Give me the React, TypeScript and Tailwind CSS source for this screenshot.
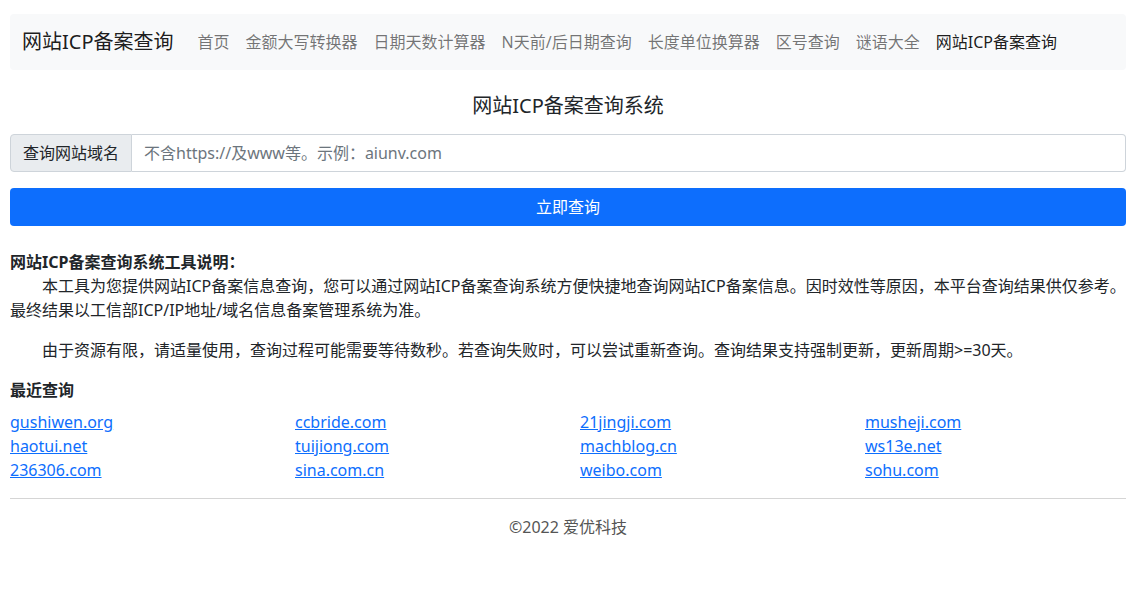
import React from "react";

const NAV_LINKS = [
  { label: "首页" },
  { label: "金额大写转换器" },
  { label: "日期天数计算器" },
  { label: "N天前/后日期查询" },
  { label: "长度单位换算器" },
  { label: "区号查询" },
  { label: "谜语大全" },
  { label: "网站ICP备案查询", active: true },
];

const RECENT = [
  "gushiwen.org", "ccbride.com", "21jingji.com", "musheji.com",
  "haotui.net", "tuijiong.com", "machblog.cn", "ws13e.net",
  "236306.com", "sina.com.cn", "weibo.com", "sohu.com",
];

export default function App() {
  return (
    <div
      className="min-h-[597px] bg-white text-[#212529] text-[16px] leading-[24px]"
      style={{ fontFamily: '"Noto Sans", "Noto Sans CJK SC", sans-serif' }}
    >
      <div className="ml-[10px] w-[1116px] pt-[14px]">
        {/* Navbar */}
        <nav className="h-[56px] bg-[#f8f9fa] rounded-[4px] flex items-center px-[12px]">
          <span className="text-[20px] leading-[30px] text-black/90 mr-[16px]">网站ICP备案查询</span>
          <ul className="flex items-center">
            {NAV_LINKS.map(({ label, active }) => (
              <li key={label}>
                <a
                  href="#"
                  className={`block px-[8px] py-[8px] ${active ? "text-black/90" : "text-black/55"}`}
                >
                  {label}
                </a>
              </li>
            ))}
          </ul>
        </nav>

        {/* Title */}
        <h5 className="text-center text-[20px] leading-[30px] mt-[21px] mb-[13px]">网站ICP备案查询系统</h5>

        {/* Search */}
        <div className="flex h-[38px]">
          <span className="flex items-center px-[12px] bg-[#e9ecef] border border-[#ced4da] rounded-l-[4px]">
            查询网站域名
          </span>
          <input
            className="flex-1 min-w-0 px-[12px] border border-l-0 border-[#ced4da] rounded-r-[4px] outline-none placeholder:text-[#6c757d]"
            placeholder="不含https://及www等。示例：aiunv.com"
          />
        </div>
        <button className="mt-[16px] w-full h-[38px] bg-[#0d6efd] text-white rounded-[4px]">立即查询</button>

        {/* Description */}
        <div className="mt-[24px]">
          <b className="block font-bold">网站ICP备案查询系统工具说明：</b>
          <p className="indent-[2em] mb-[16px]">
            本工具为您提供网站ICP备案信息查询，您可以通过网站ICP备案查询系统方便快捷地查询网站ICP备案信息。因时效性等原因，本平台查询结果供仅参考。最终结果以工信部ICP/IP地址/域名信息备案管理系统为准。
          </p>
          <p className="indent-[2em] mb-[16px]">
            由于资源有限，请适量使用，查询过程可能需要等待数秒。若查询失败时，可以尝试重新查询。查询结果支持强制更新，更新周期&gt;=30天。
          </p>
        </div>

        {/* Recent */}
        <h6 className="font-bold mb-[8px]">最近查询</h6>
        <div className="grid grid-cols-4 mr-[-24px]">
          {RECENT.map((d) => (
            <div key={d} className="pr-[24px]">
              <a href="#" className="text-[#0d6efd] underline">{d}</a>
            </div>
          ))}
        </div>

        <hr className="mt-[16px] mb-[16px] border-t border-[#d5d5d5]" />
        <p className="text-center text-[#555]">©2022 爱优科技</p>
      </div>
    </div>
  );
}
